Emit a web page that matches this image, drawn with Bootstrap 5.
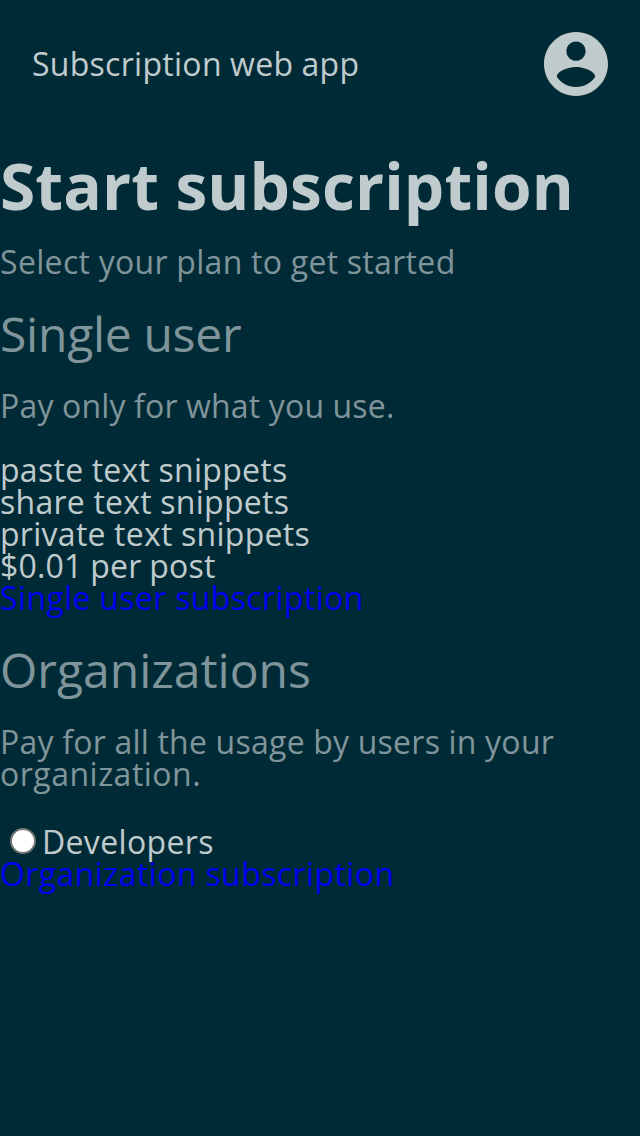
<!DOCTYPE html>
<html lang="en">
<head>
<meta charset="utf-8">
<meta name="viewport" content="width=device-width, initial-scale=1">
<title>Subscription web app</title>
<link href="https://cdn.jsdelivr.net/npm/bootstrap@5.3.0/dist/css/bootstrap.min.css" rel="stylesheet">
<style>
body{background:#002b36;color:#c0cbce;font-family:"Open Sans",sans-serif;font-size:32px;line-height:32px;letter-spacing:.28px;word-spacing:-.32px}
.app-bar{height:128px;padding:0 32px}
.app-bar svg{width:64px;height:64px;fill:#c0cbce}
h1{font-size:64px;line-height:64px;font-weight:700;margin:26px 0 28px;letter-spacing:.1px}
h2{font-size:48px;line-height:48px;font-weight:400;margin:32px 0;letter-spacing:0}
h2,.muted-text{color:#80959b}
.muted-text{margin-bottom:32px}
.intro{letter-spacing:.335px}
.single-title{letter-spacing:-.25px}
.single-copy{letter-spacing:.22px}
.price{letter-spacing:.2px;word-spacing:-.8px}
.single-link{letter-spacing:.38px}
.last-line{letter-spacing:.49px}
.org-link{letter-spacing:.42px}
a{color:#00e;text-decoration:none}
.plan-radio{appearance:none;width:26px;height:26px;border:2px solid #767676;border-radius:50%;background:#fff;margin:0 6px 0 10px}
.plan-option{height:36px;padding-top:2px;letter-spacing:.34px}
.plan-option span{padding-top:2px}
</style>
</head>
<body class="min-vh-100">
<header class="app-bar d-flex align-items-center justify-content-between">
<span>Subscription web app</span>
<svg viewBox="2 2 20 20" role="img" aria-label="Account"><path d="M12 2C6.480 2 2 6.480 2 12s4.480 10 10 10 10-4.480 10-10S17.520 2 12 2zm0 3c1.660 0 3 1.340 3 3s-1.340 3-3 3-3-1.340-3-3 1.340-3 3-3zm0 14.200c-2.500 0-4.710-1.280-6-3.220.030-1.990 4-3.080 6-3.080 1.990 0 5.970 1.090 6 3.080-1.290 1.940-3.500 3.220-6 3.220z"/></svg>
</header>
<main>
<h1>Start subscription</h1>
<p class="muted-text intro m-0">Select your plan to get started</p>
<section>
<h2 class="single-title">Single user</h2>
<p class="muted-text single-copy">Pay only for what you use.</p>
<ul class="list-unstyled m-0"><li>paste text snippets</li><li>share text snippets</li><li>private text snippets</li><li class="price">$0.01 per post</li></ul>
<a class="d-block single-link" href="#">Single user subscription</a>
</section>
<section>
<h2>Organizations</h2>
<p class="muted-text">Pay for all the usage by users in your <span class="last-line">organization.</span></p>
<label class="plan-option d-flex align-items-center"><input class="plan-radio" type="radio" name="plan"><span>Developers</span></label>
<a class="d-block org-link" href="#">Organization subscription</a>
</section>
</main>
<script src="https://cdn.jsdelivr.net/npm/bootstrap@5.3.0/dist/js/bootstrap.bundle.min.js"></script>
</body>
</html>
